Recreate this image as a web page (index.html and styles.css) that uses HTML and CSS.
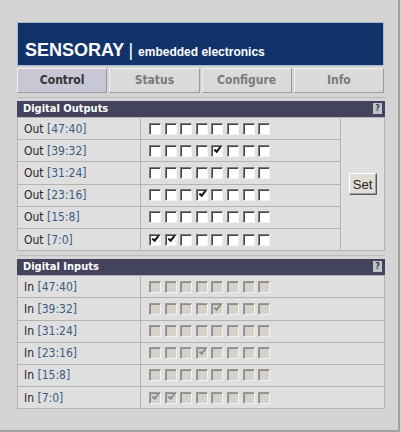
FILE: index.html
```html
<!DOCTYPE html>
<html>
<head>
    <title>Sensoray - Control</title>
    <meta name="viewport" content="width=device-width,initial-scale=1.0">
    <link rel="stylesheet" href="styles.css">
</head>
<body>
    <div class="page">
        <div class="banner">
            <span class="brand">SENSORAY</span>
            <span class="bar">|</span>
            <span class="tagline">embedded electronics</span>
        </div>
        <div class="tabs">
            <a class="tab active">Control</a>
            <a class="tab">Status</a>
            <a class="tab">Configure</a>
            <a class="tab">Info</a>
        </div>

        <div class="panel">
            <div class="panel-head">Digital Outputs <span class="help">?</span></div>
            <table class="io" id="outputs"></table>
        </div>

        <div class="panel inputs">
            <div class="panel-head">Digital Inputs <span class="help">?</span></div>
            <table class="io" id="inputs"></table>
        </div>
    </div>
    <script>
        var ranges = ["47:40", "39:32", "31:24", "23:16", "15:8", "7:0"];
        // checked bits per row (index from left)
        var checked = [[], [4], [], [3], [], [0, 1]];

        function buildTable(id, prefix, withSet) {
            var table = document.getElementById(id);
            var html = "";
            for (var r = 0; r < ranges.length; r++) {
                html += '<tr><td class="name">' + prefix + ' <span class="range">[' + ranges[r] + ']</span></td><td class="bits">';
                for (var b = 0; b < 8; b++) {
                    var on = checked[r].indexOf(b) >= 0 ? " on" : "";
                    html += '<span class="cb' + on + '"></span>';
                }
                html += '</td>';
                if (withSet && r === 0) {
                    html += '<td class="set" rowspan="6"><button class="btn">Set</button></td>';
                }
                html += '</tr>';
            }
            table.innerHTML = html;
        }

        buildTable("outputs", "Out", true);
        buildTable("inputs", "In", false);
    </script>
</body>
</html>
```

FILE: styles.css
```css
body{
    margin: 0;
    background: #d4d4d4;
}

.page{
    box-sizing: border-box;
    width: 400px;
    height: 432px;
    padding: 22px 0 0 17px;
    background: #d4d4d4;
    border-right: 2px solid #a2a2a2;
    border-bottom: 2px solid #a2a2a2;
    font-family: "DejaVu Sans Condensed", "DejaVu Sans", sans-serif;
}

.banner{
    box-sizing: border-box;
    width: 367px;
    height: 44px;
    padding: 0 0 6px 7px;
    display: flex;
    align-items: flex-end;
    background: #10336a;
    border: 1px solid #a9b8cf;
    color: #fff;
    font-family: "Liberation Sans", Arial, sans-serif;
    font-weight: bold;
}

.brand{
    font-size: 18px;
    line-height: 18px;
}

.bar{
    font-size: 18px;
    line-height: 18px;
    font-weight: normal;
    margin: 0 5px 0 4px;
}

.tagline{
    font-size: 12px;
    line-height: 14px;
}

.tabs{
    width: 367px;
    margin-top: 2px;
    display: flex;
    gap: 2px;
}

.tab{
    flex: 1;
    box-sizing: border-box;
    height: 25px;
    line-height: 23px;
    text-align: center;
    font-size: 12px;
    font-weight: bold;
    color: #7a7a7a;
    background: #dadada;
    border: 1px solid;
    border-color: #efefef #9a9a9a #9a9a9a #efefef;
}

.tab.active{
    color: #333;
    background: #c7c7d5;
}

.panel{
    width: 368px;
    margin-top: 4px;
    padding-top: 3px;
    border-top: 1px solid #bcbcbc;
}

.panel.inputs{
    margin-top: 4px;
}

.panel-head{
    position: relative;
    height: 16px;
    line-height: 16px;
    padding-left: 6px;
    background: #43435b;
    color: #fff;
    font-size: 11px;
    font-weight: bold;
}

.help{
    position: absolute;
    right: 3px;
    top: 2px;
    width: 9px;
    height: 11px;
    line-height: 11px;
    text-align: center;
    background: #bfc3cc;
    color: #3a3a4a;
    font-size: 9px;
}

.io{
    width: 100%;
    table-layout: fixed;
    border-collapse: collapse;
}

.io td{
    height: 21.2px;
    padding: 0;
    background: #dfdfdf;
    border: 1px solid #b3b3b3;
    font-size: 12px;
    color: #2a2228;
}

.io .name{
    width: 116px;
    padding-left: 6px;
}

.range{
    color: #3b5b82;
}

.io .bits{
    padding-left: 8px;
    font-size: 0;
}

.io .set{
    width: 43px;
    text-align: center;
}

.cb{
    position: relative;
    display: inline-block;
    box-sizing: border-box;
    width: 12px;
    height: 12px;
    margin-right: 3.6px;
    vertical-align: middle;
    background: #fff;
    border: 1px solid;
    border-color: #7a7a7a #f4f4f4 #f4f4f4 #7a7a7a;
    box-shadow: inset 1px 1px #444;
}

.cb.on:after{
    content: "";
    position: absolute;
    left: 2px;
    top: 1px;
    width: 5px;
    height: 2px;
    border-left: 2px solid #111;
    border-bottom: 2px solid #111;
    transform: rotate(-50deg);
}

.inputs .cb{
    background: #d6d2ca;
    border-color: #9a9a9a #f2f2f2 #f2f2f2 #9a9a9a;
    box-shadow: inset 1px 1px #8c8c8c;
}

.inputs .cb.on:after{
    border-color: #8e8e8e;
}

.btn{
    width: 28px;
    height: 22px;
    padding: 0;
    background: #e0ddd6;
    border: 1px solid;
    border-color: #fff #5a5a5a #5a5a5a #fff;
    box-shadow: inset -1px -1px #a0a0a0;
    font-family: "Liberation Sans", Arial, sans-serif;
    font-size: 13px;
    color: #222;
}
```
